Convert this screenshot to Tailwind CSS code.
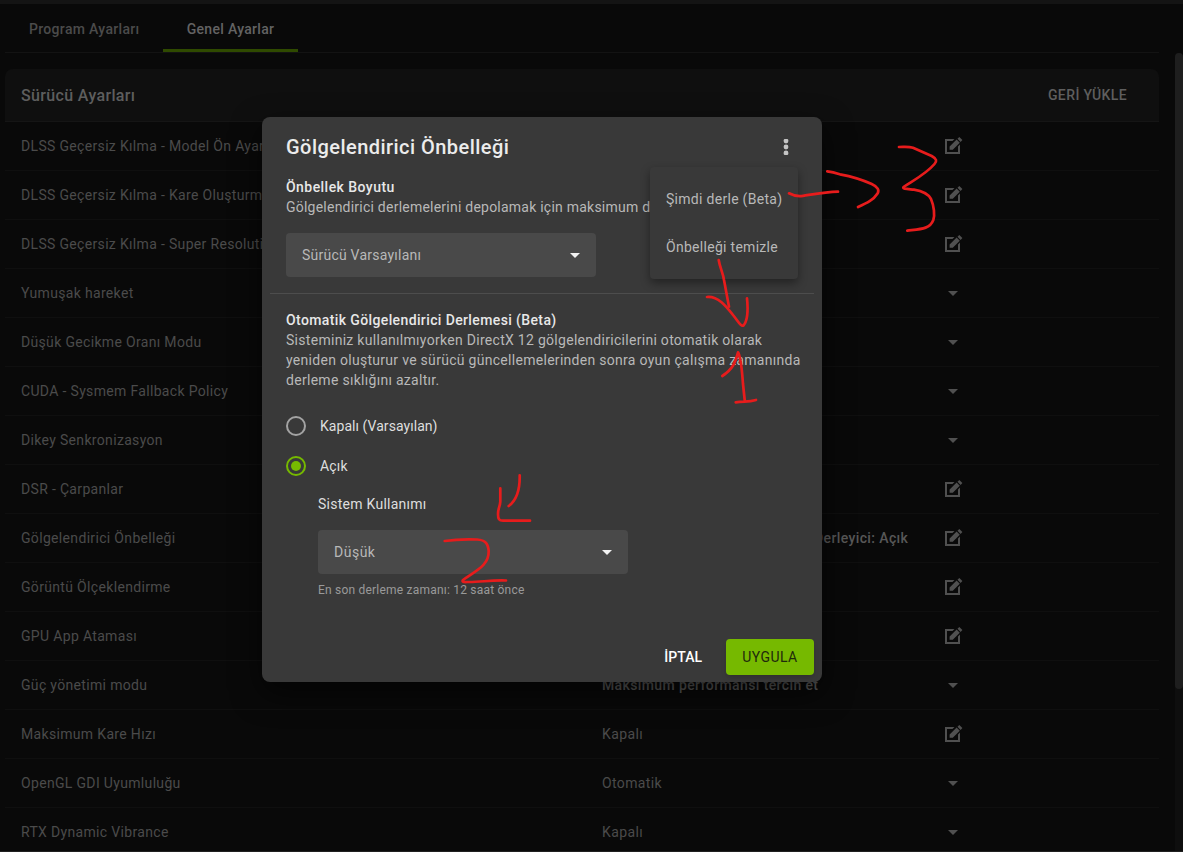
<!DOCTYPE html>
<html lang="tr">
<head>
    <meta charset="UTF-8">
    <meta name="viewport" content="width=device-width, initial-scale=1.0">
    <title>Genel Ayarlar</title>
    <script src="https://cdn.jsdelivr.net/npm/@tailwindcss/browser@4"></script>
</head>
<body class="bg-[#090909] font-['Roboto',sans-serif] text-sm text-[#4b4b4b] overflow-hidden">

    <div class="relative w-[1183px] h-[852px] overflow-hidden border-t-4 border-[#141414]">

        <div class="flex">
            <main class="w-[1154px] ml-[5px]">
                <!-- Sekmeler -->
                <nav class="flex h-[49px] border-b border-[#131313] font-medium">
                    <a class="w-[158px] pl-6 pt-[15px] tracking-[0.32px]">Program Ayarları</a>
                    <a class="w-[135px] h-12 pt-[15px] text-center text-[#636363] tracking-[0.3px] border-b-3 border-[#2f4a00]">Genel Ayarlar</a>
                </nav>

                <!-- Ayar listesi -->
                <section class="mt-4">
                    <div class="flex items-center justify-between h-[53px] pl-4 pr-8 bg-[#0f0f0f] border-b border-[#151515] rounded-t-lg font-medium text-[#5e5e5e]">
                        <h2 class="pt-0.5 text-base tracking-[0.35px]">Sürücü Ayarları</h2>
                        <button class="tracking-[0.4px]">GERİ YÜKLE</button>
                    </div>
                    <div id="liste"></div>
                </section>
            </main>
            <div class="ml-4 mt-[49px] w-2 h-[798px] rounded-t-full bg-[#0e0e0e]">
                <div class="h-[636px] rounded-full bg-[#1e1e1e]"></div>
            </div>
        </div>

        <!-- Pencere -->
        <div class="absolute left-[262px] top-[113px] w-[560px] h-[565px] bg-[#393939] rounded-lg shadow-[0_11px_30px_rgba(0,0,0,0.6)] text-[#b8b8b8] leading-5">
            <div class="flex items-center justify-between h-[60px] pl-6 pr-[33px]">
                <h1 class="text-xl font-medium text-[#ececec] tracking-[0.46px]">Gölgelendirici Önbelleği</h1>
                <svg class="w-1.5 h-4" viewBox="0 0 6 16" fill="#c4c4c4"><circle cx="3" cy="2" r="2.4"/><circle cx="3" cy="8" r="2.4"/><circle cx="3" cy="14" r="2.4"/></svg>
            </div>

            <div class="px-6 whitespace-nowrap">
                <h3 class="font-medium text-[#e8e8e8] tracking-[0.45px]">Önbellek Boyutu</h3>
                <p class="tracking-[0.23px]">Gölgelendirici derlemelerini depolamak için maksimum d</p>
                <div class="flex items-center justify-between w-[310px] h-11 mt-4 px-4 rounded bg-[#494949]">
                    <span class="tracking-[0.23px]">Sürücü Varsayılanı</span>
                    <svg class="w-2.5 h-[5px]" viewBox="0 0 10 5" fill="#f2f2f2"><path d="M0 0h10L5 5z"/></svg>
                </div>
            </div>

            <hr class="mx-2 mt-4 border-[#4d4d4d]">

            <div class="px-6 pt-4 whitespace-nowrap">
                <h3 class="font-medium text-[#e8e8e8] tracking-[0.38px]">Otomatik Gölgelendirici Derlemesi (Beta)</h3>
                <p class="tracking-[0.29px]">Sisteminiz kullanılmıyorken DirectX 12 gölgelendiricilerini otomatik olarak<br>yeniden oluşturur ve sürücü güncellemelerinden sonra oyun çalışma zamanında<br>derleme sıklığını azaltır.</p>

                <div class="flex items-center gap-3.5 mt-[26px] text-[#dedede]">
                    <span class="w-5 h-5 rounded-full border-2 border-[#a3a3a3]"></span>
                    <span class="tracking-[0.05px]">Kapalı (Varsayılan)</span>
                </div>
                <div class="flex items-center gap-3.5 mt-5 text-[#dedede]">
                    <span class="flex items-center justify-center w-5 h-5 rounded-full border-2 border-[#76b900]"><span class="w-2.5 h-2.5 rounded-full bg-[#76b900]"></span></span>
                    <span class="tracking-[0.2px]">Açık</span>
                </div>

                <div class="pl-8">
                    <p class="mt-[18px] text-[#dedede] tracking-[0.26px]">Sistem Kullanımı</p>
                    <div class="flex items-center justify-between w-[310px] h-11 mt-4 px-4 rounded bg-[#494949]">
                        <span class="tracking-[0.5px]">Düşük</span>
                        <svg class="w-2.5 h-[5px]" viewBox="0 0 10 5" fill="#f2f2f2"><path d="M0 0h10L5 5z"/></svg>
                    </div>
                    <p class="mt-1.5 text-xs leading-5 text-[#999999] tracking-[0.21px]">En son derleme zamanı: 12 saat önce</p>
                </div>
            </div>

            <div class="flex justify-end gap-2 mt-[39px] pr-2 font-medium">
                <button class="h-9 px-4 text-white">İPTAL</button>
                <button class="w-22 h-9 rounded bg-[#76b900] text-[#1f2a0c] font-normal tracking-[0.45px] shadow-md">UYGULA</button>
            </div>

            <!-- Üç nokta menüsü -->
            <div class="absolute left-[388px] top-[50px] w-[148px] py-2 rounded bg-[#393939] shadow-[0_4px_10px_rgba(0,0,0,0.4)] whitespace-nowrap tracking-[0.29px]">
                <div class="flex items-center h-12 px-4"><span>Şimdi derle (Beta)</span></div>
                <div class="flex items-center h-12 px-4"><span>Önbelleği temizle</span></div>
            </div>
        </div>

        <!-- Elle çizilmiş işaretler -->
        <svg class="absolute left-0 -top-1 w-[1183px] h-[852px]" viewBox="0 0 1183 852" fill="none" stroke="#e71c1c" stroke-width="2.7" stroke-linecap="round" stroke-linejoin="round">
            <path d="M789 193.3C794 196 798 196.500 803 195.800C815 194 826 192 838 191.700"/>
            <path d="M827.3 171.300C833 172 836 173 840 174.300C852 176.500 862 179.500 871.700 184C878 187 879.500 190 877.500 193.500C873.500 200 867 203 858 207"/>
            <path d="M899 147C905 147 909 146.500 913 147.700L931.700 156C937 159 937 161 934.500 164C926 174 914 180 903.500 187C902 189 908 189 914 189.700C922 191 928 193.500 931 199C934 206 935 215 933.300 220C930 229 921 229 907.300 230.700"/>
            <path d="M718.7 260C720 268 723 273 724 280L729 306.700"/>
            <path d="M707 297C718 296 726 306 733 315C738 321 741 327 743.500 325.500C748 320 748 308 747 298.300"/>
            <path d="M722.3 376C733 369 735 363 738 352.300C741 357 742 370 743 384L744.700 400M735.7 402.300C744 401 748 402.500 756 400"/>
            <path d="M500.3 488.300V501.700C500 507 498 508 498 514C498 519 499 520.700 503 520.700H530"/>
            <path d="M519.7 475.300C520 490 517 500 508.700 506"/>
            <path d="M444.7 541C458 539 466 539 477 539.500C486 540 488 544 488.700 551C489 566 475 571 463 580C461.500 582.500 464 582 469 582C482 582 490 580 506 580.500"/>
        </svg>

        <div class="absolute left-0 bottom-0 w-full h-px bg-[#202020]"></div>
    </div>

    <script>
        const ayarlar = [
            { ad: "DLSS Geçersiz Kılma - Model Ön Ayarı", tip: "duzenle" },
            { ad: "DLSS Geçersiz Kılma - Kare Oluşturma", tip: "duzenle" },
            { ad: "DLSS Geçersiz Kılma - Super Resolution", tip: "duzenle" },
            { ad: "Yumuşak hareket", tip: "liste" },
            { ad: "Düşük Gecikme Oranı Modu", tip: "liste" },
            { ad: "CUDA - Sysmem Fallback Policy", tip: "liste" },
            { ad: "Dikey Senkronizasyon", tip: "liste" },
            { ad: "DSR - Çarpanlar", tip: "duzenle" },
            { ad: "Gölgelendirici Önbelleği", deger: "Derleyici: Açık", sagda: true, kalin: true, tip: "duzenle" },
            { ad: "Görüntü Ölçeklendirme", tip: "duzenle" },
            { ad: "GPU App Ataması", tip: "duzenle" },
            { ad: "Güç yönetimi modu", deger: "Maksimum performansı tercih et", kalin: true, tip: "liste" },
            { ad: "Maksimum Kare Hızı", deger: "Kapalı", tip: "duzenle" },
            { ad: "OpenGL GDI Uyumluluğu", deger: "Otomatik", tip: "liste" },
            { ad: "RTX Dynamic Vibrance", deger: "Kapalı", tip: "liste" },
        ];

        const simgeler = {
            duzenle: `<svg class="w-[18px] h-[18px]" viewBox="0 0 18 18" fill="#505050"><path d="M0 2h9.500L7.500 4H2v11h11V9.500l2-2V17H0z"/><path d="M4.600 9.500L11.600 2.500l3.200 3.200L7.800 12.700H4.600zM12.500 1.700L14.300 0l3.100 3.100-1.800 1.800z"/></svg>`,
            liste: `<svg class="w-2.5 h-[5px] ml-[3px]" viewBox="0 0 10 5" fill="#505050"><path d="M0 0h10L5 5z"/></svg>`,
        };

        document.getElementById("liste").innerHTML = ayarlar.map(a => `
            <div class="flex items-center h-[49px] pl-4 border-b border-[#0f0f0f] whitespace-nowrap">
                <span class="w-[581px] tracking-[0.33px]">${a.ad}</span>
                <span class="w-[343px] ${a.sagda ? "pl-[212px]" : ""} ${a.kalin ? "font-medium text-[#575757]" : ""} tracking-[0.38px]">${a.deger || ""}</span>
                ${simgeler[a.tip]}
            </div>`).join("");
    </script>
</body>
</html>
